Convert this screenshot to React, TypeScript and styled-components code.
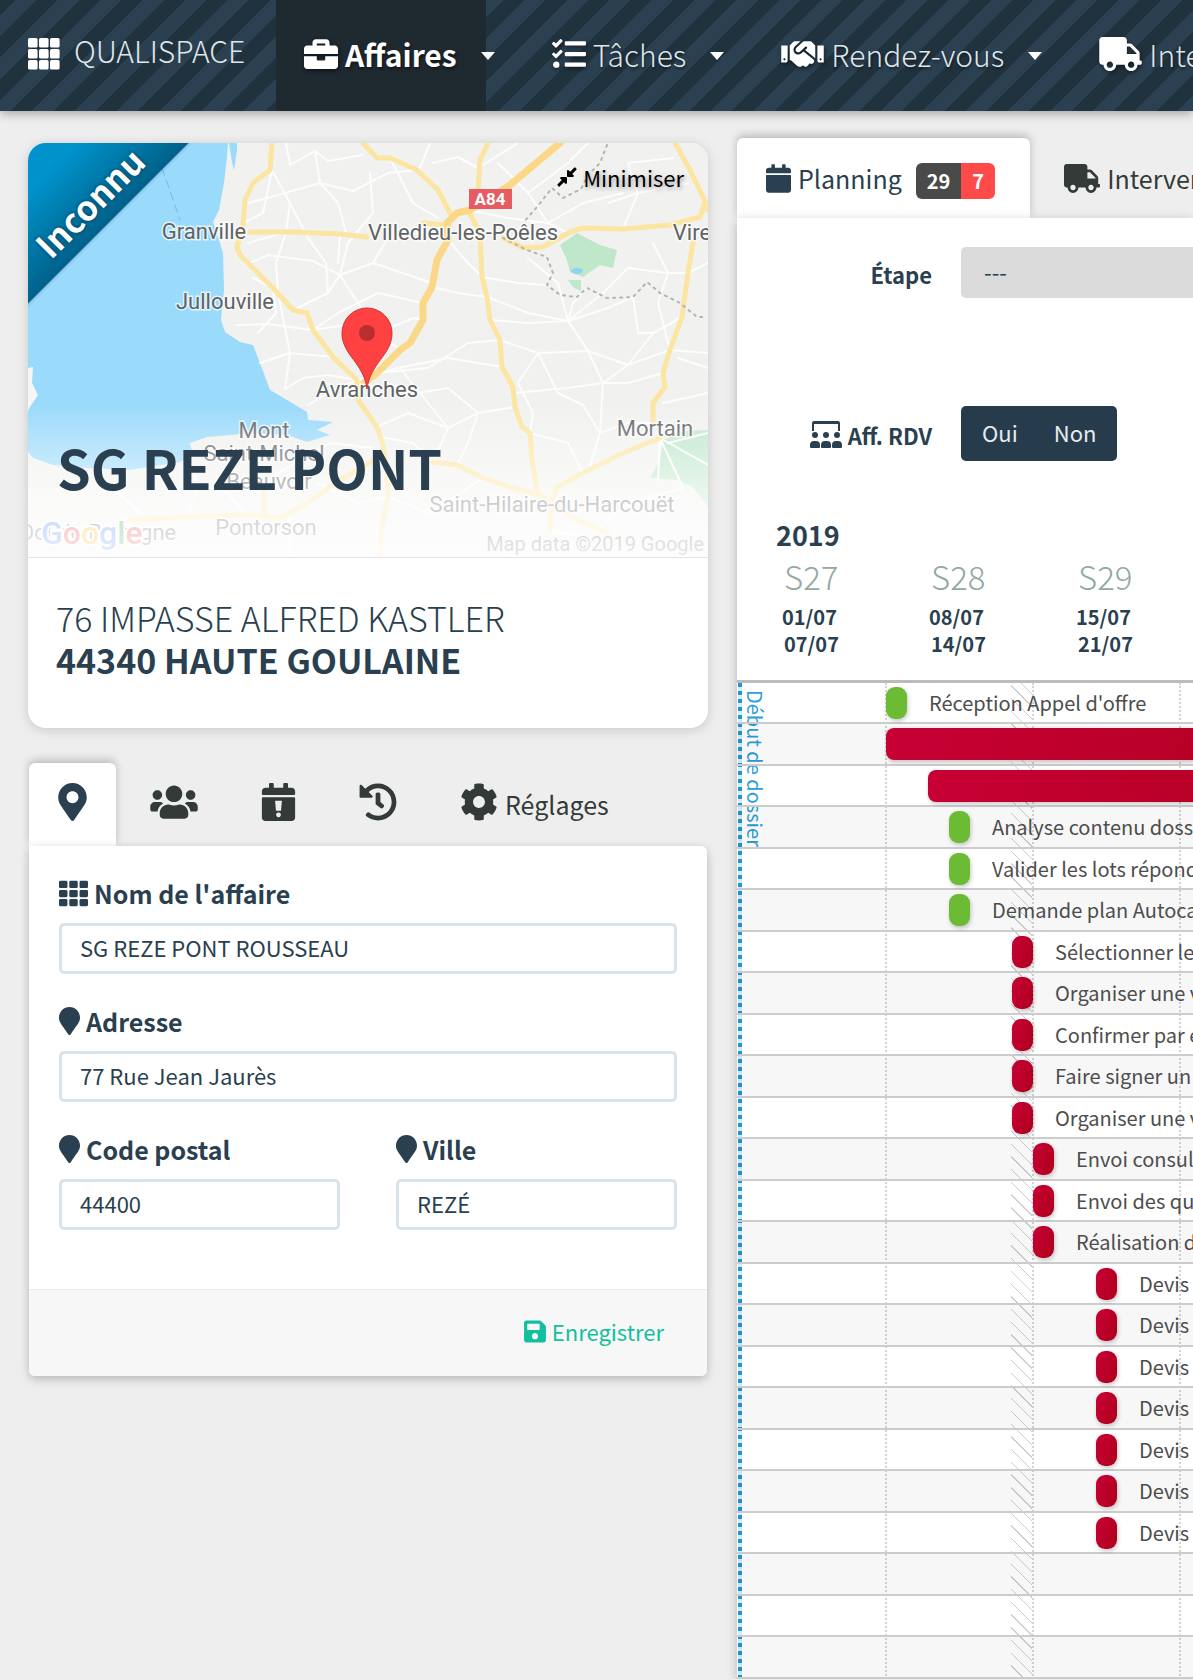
import React from "react";
import styled, { createGlobalStyle, css } from "styled-components";
import {
  FaBriefcase,
  FaCalendar,
  FaCog,
  FaCompressAlt,
  FaHandshake,
  FaHistory,
  FaMapMarker,
  FaMapMarkerAlt,
  FaSave,
  FaTasks,
  FaTh,
  FaTruck,
  FaUsers,
} from "react-icons/fa";

const NAVY = "#2a3f4f";
const GREEN = "#6bbb35";
const FONT = `"Noto Sans CJK SC", "Noto Sans", sans-serif`;

const GlobalStyle = createGlobalStyle`
  *, *::before, *::after { box-sizing: border-box; }
  body {
    margin: 0;
    background: #eeeeee;
    color: ${NAVY};
    font-family: ${FONT};
    font-size: 24px;
    line-height: 36px;
    overflow-x: hidden;
  }
  button, input, select { font: inherit; color: inherit; }
  a { color: inherit; text-decoration: none; }
`;

/* ---------- icons ---------- */

const Icon = styled.span<{ $w: number; $h?: number }>`
  display: inline-flex;
  flex: none;
  align-items: center;
  justify-content: center;
  width: ${(p) => p.$w}px;
  svg {
    display: block;
    width: 100%;
    height: ${(p) => p.$h ?? p.$w}px;
  }
`;

const GridIcon = () => (
  <svg viewBox="0 0 32 32" fill="currentColor" aria-hidden="true">
    {[0, 11, 22].map((y) =>
      [0, 11, 22].map((x) => <rect key={`${x}-${y}`} x={x} y={y} width="9.6" height="9.6" rx="1.6" />)
    )}
  </svg>
);

const CalendarAlertIcon = () => (
  <svg viewBox="0 0 448 512" fill="currentColor" fillRule="evenodd" aria-hidden="true">
    <path d="M12 192h424c6.600 0 12 5.400 12 12v260c0 26.500-21.500 48-48 48H48c-26.500 0-48-21.500-48-48V204c0-6.600 5.400-12 12-12zm436-44v-36c0-26.500-21.500-48-48-48h-48V12c0-6.600-5.400-12-12-12h-40c-6.600 0-12 5.400-12 12v52H160V12c0-6.600-5.400-12-12-12h-40c-6.600 0-12 5.400-12 12v52H48C21.500 64 0 85.500 0 112v36c0 6.600 5.400 12 12 12h424c6.600 0 12-5.400 12-12zM178 240l12 134h68l12-134zM224 396a32 32 0 1 0 0.100 0z" />
  </svg>
);

const MeetingIcon = () => (
  <svg viewBox="0 0 32 27" fill="currentColor" aria-hidden="true">
    <path d="M2 10V2a2 2 0 0 1 2-2h24a2 2 0 0 1 2 2v8h-2V3H4v7z" />
    {[5, 16, 27].map((x) => (
      <g key={x}>
        <circle cx={x} cy="14" r="3" />
        <path d={`M${x - 5} 26v-2a4 4 0 0 1 4-4h2a4 4 0 0 1 4 4v2q0 1-1 1h-8q-1 0-1-1z`} />
      </g>
    ))}
  </svg>
);

/* ---------- top bar ---------- */

const TopBar = styled.header`
  position: relative;
  display: flex;
  height: 111px;
  overflow: hidden;
  color: #ffffff;
  background: repeating-linear-gradient(135deg, #21323f 0 11px, #2b4050 11px 26px, #21323f 26px 30px);
`;

const TopBarShadow = styled.div`
  box-shadow: 0 2px 10px rgba(0, 0, 0, 0.35);
`;

const Brand = styled.a`
  display: flex;
  flex: none;
  align-items: center;
  gap: 14px;
  width: 276px;
  padding-left: 28px;
  padding-bottom: 4px;
  font-size: 30px;
  font-weight: 300;
`;

const BrandName = styled.span`
  padding-bottom: 8px;
  color: #dfe6ea;
`;

const NavItem = styled.div`
  display: flex;
  flex: none;
`;

const NavLink = styled.a<{ $active?: boolean }>`
  display: flex;
  align-items: center;
  gap: 7px;
  padding: 0 29px 4px 28px;
  font-size: 30px;
  font-weight: ${(p) => (p.$active ? 700 : 300)};
  color: ${(p) => (p.$active ? "#ffffff" : "#dfe6ea")};
  background: ${(p) => (p.$active ? "#1e2930" : "transparent")};
  text-shadow: 1px 2px 3px rgba(0, 0, 0, 0.5);
  svg {
    color: #ffffff;
    filter: drop-shadow(1px 2px 2px rgba(0, 0, 0, 0.5));
  }
`;

const CaretButton = styled.button`
  width: 47px;
  margin-left: -9px;
  padding: 0 0 0 4px;
  border: 0;
  background: none;
  &::before {
    content: "";
    display: block;
    width: 14px;
    border: 7px solid transparent;
    border-top: 8px solid #ffffff;
    border-bottom: 0;
  }
`;

/* ---------- page ---------- */

const Page = styled.main`
  display: grid;
  grid-template-columns: minmax(0, 85fr) minmax(0, 57fr);
  column-gap: 29px;
  align-items: start;
  padding-left: 28px;
`;

const LeftColumn = styled.div`
  display: grid;
  gap: 35px;
  padding-top: 32px;
`;

const MapCard = styled.section`
  overflow: hidden;
  border-radius: 18px;
  background: #ffffff;
  box-shadow: 0 2px 12px rgba(0, 0, 0, 0.16);
`;

const MapArea = styled.div`
  position: relative;
  height: 415px;
  border-bottom: 1px solid #e4e4e4;
  overflow: hidden;
`;

const MapDrawing = styled.svg`
  display: block;
  width: 100%;
  height: 100%;
  font-family: Roboto, sans-serif;
`;

const MapFade = styled.div`
  position: absolute;
  inset: 260px 0 0;
  background: linear-gradient(rgba(255, 255, 255, 0), rgba(255, 255, 255, 0.66) 60%, rgba(255, 255, 255, 0.86));
`;

const Ribbon = styled.div`
  position: absolute;
  top: -30px;
  left: -94px;
  width: 260px;
  height: 128px;
  padding-bottom: 4px;
  display: flex;
  align-items: flex-end;
  justify-content: center;
  transform: rotate(-45deg);
  background: linear-gradient(#0092ca 40%, #00618a);
  box-shadow: 0 0 4px rgba(0, 0, 0, 0.3);
  color: #ffffff;
  font-size: 34px;
  font-weight: 700;
  line-height: 48px;
  text-shadow: 0 0 4px rgba(0, 0, 0, 0.5);
`;

const MinimiseButton = styled.button`
  position: absolute;
  top: 16px;
  right: 24px;
  display: flex;
  align-items: center;
  gap: 5px;
  padding: 0;
  border: 0;
  background: none;
  color: #000000;
  font-size: 22px;
  text-shadow: 1px 2px 4px rgba(0, 0, 0, 0.35);
`;

const CardTitle = styled.h1`
  position: absolute;
  left: 29px;
  bottom: 50px;
  margin: 0;
  font-size: 54px;
  line-height: 80px;
  font-weight: 700;
`;

const Address = styled.address`
  padding: 39px 28px 47px;
  font-style: normal;
  font-size: 34px;
  line-height: 42px;
  font-weight: 300;
  strong {
    display: block;
    font-weight: 700;
  }
`;

/* ---------- tabs and panels ---------- */

const Tabs = styled.nav`
  position: relative;
  display: flex;
  align-items: stretch;
`;

const Tab = styled.button<{ $active?: boolean }>`
  display: flex;
  flex: none;
  align-items: center;
  gap: 7px;
  padding: 0 29px;
  border: 0;
  border-radius: 6px 6px 0 0;
  background: none;
  font-size: 25px;
  white-space: nowrap;
  color: ${(p) => (p.$active ? NAVY : "#333a38")};
  ${(p) =>
    p.$active &&
    css`
      background: #ffffff;
      box-shadow: 0 -3px 9px rgba(0, 0, 0, 0.22);
    `}
`;

const CaseTabs = styled(Tabs)`
  height: 83px;
  padding: 0 1px;
  ${Tab} {
    padding-bottom: 6px;
  }
  ${Tab} + ${Tab} {
    margin-left: 5px;
  }
`;

const TabLabel = styled.span`
  padding-top: 4px;
`;

const Panel = styled.form`
  position: relative;
  margin: 0 1px;
  border-radius: 0 6px 6px 6px;
  background: #ffffff;
  box-shadow: 0 3px 10px rgba(0, 0, 0, 0.24);
  overflow: hidden;
`;

const TabbedSection = styled.section`
  isolation: isolate;
`;

const Fields = styled.div`
  display: grid;
  grid-template-columns: repeat(2, minmax(0, 1fr));
  column-gap: 56px;
  row-gap: 28px;
  padding: 28px 30px 59px;
`;

const Field = styled.div<{ $wide?: boolean }>`
  display: grid;
  gap: 11px;
  grid-column: ${(p) => (p.$wide ? "1 / -1" : "auto")};
`;

const FieldLabel = styled.label`
  display: flex;
  align-items: center;
  gap: 6px;
  font-size: 25px;
  line-height: 38px;
  font-weight: 700;
`;

const TextInput = styled.input`
  width: 100%;
  height: 51px;
  padding: 0 18px 3px;
  border: 3px solid #d9e4ea;
  border-radius: 5px;
  background: #ffffff;
  font-size: 22px;
  outline: 0;
`;

const PanelFooter = styled.footer`
  display: flex;
  justify-content: flex-end;
  padding: 23px 43px 27px;
  border-top: 1px solid #ececec;
  background: #f7f7f7;
`;

const SaveButton = styled.button`
  display: flex;
  align-items: center;
  gap: 6px;
  padding: 0;
  border: 0;
  background: none;
  color: #11c09f;
  font-size: 22px;
`;

/* ---------- planning ---------- */

const PlanningSection = styled(TabbedSection)`
  padding-top: 27px;
`;

const PlanningTabs = styled(Tabs)`
  height: 80px;
  ${Tab} {
    padding-right: 35px;
  }
  ${Tab} + ${Tab} {
    padding-left: 34px;
  }
`;

const Badges = styled.span`
  display: flex;
  margin: 5px 0 0 7px;
  overflow: hidden;
  border-radius: 6px;
  color: #ffffff;
  font-size: 20px;
  font-weight: 700;
`;

const Badge = styled.span<{ $tone: string }>`
  padding: 0 11px;
  background: ${(p) => p.$tone};
`;

const PlanningPanel = styled.div`
  position: relative;
  background: #ffffff;
  box-shadow: 0 3px 10px rgba(0, 0, 0, 0.24);
`;

const Filters = styled.div`
  display: grid;
  grid-template-columns: 195px minmax(0, 1fr);
  column-gap: 29px;
  row-gap: 108px;
  align-items: center;
  height: 270px;
  padding-top: 29px;
  align-content: start;
`;

const FilterLabel = styled.label`
  display: flex;
  align-items: center;
  justify-content: flex-end;
  gap: 6px;
  padding-top: 2px;
  font-size: 22px;
  font-weight: 700;
`;

const StepSelect = styled.select`
  appearance: none;
  width: 100%;
  height: 51px;
  padding: 0 23px 4px;
  border: 0;
  border-radius: 5px 0 0 5px;
  background: #dbdbdb;
  font-size: 22px;
`;

const Toggle = styled.div`
  display: flex;
  justify-self: start;
  padding: 0 3px;
  border-radius: 5px;
  background: #263c4c;
`;

const ToggleButton = styled.button`
  height: 55px;
  padding: 0 18px 3px;
  border: 0;
  background: none;
  color: #e6ebee;
  font-size: 22px;
`;

const WeekHeader = styled.div`
  height: 195px;
  overflow: hidden;
  border-bottom: 3px solid #bcbcbc;
`;

const Year = styled.div`
  padding: 28px 0 0 39px;
  font-size: 27px;
  line-height: 38px;
  font-weight: 700;
`;

const WeekList = styled.div`
  display: flex;
`;

const Week = styled.div`
  display: grid;
  flex: none;
  width: 147px;
  padding-left: 45px;
  font-size: 20px;
  line-height: 27px;
  font-weight: 700;
`;

const WeekNumber = styled.span`
  padding: 0 0 4px 2px;
  color: #93a9a1;
  font-size: 33px;
  line-height: 45px;
  font-weight: 300;
`;

const WeekEnd = styled.span`
  padding-left: 2px;
`;

const Chart = styled.div`
  position: relative;
  overflow: hidden;
`;

const ChartBackdrop = styled.div`
  position: absolute;
  inset: 0;
  display: flex;
  padding-left: 3px;
`;

const WeekColumn = styled.div<{ $holiday?: boolean }>`
  flex: none;
  width: 147px;
  border-right: 2px dotted #d4d4d4;
  ${(p) =>
    p.$holiday &&
    css`
      background: repeating-linear-gradient(45deg, #cecece 0 1px, transparent 1px 9px) right / 21px 100% no-repeat;
    `}
`;

const StartMark = styled.div`
  position: absolute;
  inset: 0 auto 0 1px;
  padding: 7px 0 0 4px;
  background: repeating-linear-gradient(#1d96d2 0 4px, #d5ecf7 4px 8px) left / 4px 100% no-repeat;
  color: #2a9fd8;
  font-size: 20px;
  line-height: 26px;
  writing-mode: vertical-rl;
  white-space: nowrap;
`;

const Row = styled.div`
  position: relative;
  display: flex;
  align-items: center;
  gap: 22px;
  height: 41px;
  padding-left: 2px;
  border-bottom: 2px solid #cccccc;
  color: #4d4d4d;
  font-size: 20px;
  white-space: nowrap;
  &:nth-child(odd) {
    height: 42px;
    background: rgba(0, 0, 0, 0.03);
  }
`;

const Bar = styled.span<{ $day: number; $days: number; $color: string }>`
  flex: none;
  width: ${(p) => p.$days * 21}px;
  height: 32px;
  margin-left: ${(p) => p.$day * 21}px;
  border-radius: ${(p) => (p.$days > 1 ? 8 : 9)}px;
  background: ${(p) => (p.$color === "red" ? "linear-gradient(110deg, #c80035, #ae001c)" : GREEN)};
  box-shadow: 1px 2px 4px rgba(0, 0, 0, 0.22);
`;

type Task = { day: number; days?: number; color: string; label?: string };

const tasks: (Task | null)[] = [
  { day: 7, color: "green", label: "Réception Appel d'offre" },
  { day: 7, days: 24, color: "red" },
  { day: 9, days: 22, color: "red" },
  { day: 10, color: "green", label: "Analyse contenu dossier" },
  { day: 10, color: "green", label: "Valider les lots répondus" },
  { day: 10, color: "green", label: "Demande plan Autocad" },
  { day: 13, color: "red", label: "Sélectionner les lots" },
  { day: 13, color: "red", label: "Organiser une visite" },
  { day: 13, color: "red", label: "Confirmer par écrit" },
  { day: 13, color: "red", label: "Faire signer un accord" },
  { day: 13, color: "red", label: "Organiser une visite" },
  { day: 14, color: "red", label: "Envoi consultation" },
  { day: 14, color: "red", label: "Envoi des quantités" },
  { day: 14, color: "red", label: "Réalisation devis" },
  ...Array.from({ length: 7 }, () => ({ day: 17, color: "red", label: "Devis" })),
  null,
  null,
  null,
];

const weeks = [
  ["S27", "01/07", "07/07"],
  ["S28", "08/07", "14/07"],
  ["S29", "15/07", "21/07"],
  ["S30", "22/07", "28/07"],
];

/* ---------- map ---------- */

const minorRoads = [
  "M258 0L262 22 287 8 300 18 335 12M287 8L292 40 310 60 318 90M220 60L250 52 292 40 325 48 360 30 389 27",
  "M244 27L262 60 258 89 248 120 250 150 262 210 257 246M222 120L240 112 285 118 312 132 345 120 404 140",
  "M265 167L300 150 312 132 320 100 345 70 342 30M209 182L240 181 285 187 310 170 350 150 395 160",
  "M232 220L262 210 305 214M257 246L275 235 300 232 329 237 370 225 420 215 474 224",
  "M312 132L330 160 350 190 372 207M300 150L298 120 280 95 262 60M345 120L360 95 420 85",
  "M349 230L400 225 440 200 472 197 510 210 560 208 600 222 642 207 680 210",
  "M390 30L402 0M405 20L430 14 450 25 490 0M362 15L385 60 410 75M470 20L500 50 540 20 560 0",
  "M500 50L520 80 540 90M600 20L610 50 595 86M600 20L645 15M610 50L660 40M580 60L610 50",
  "M420 97L440 120 454 134 490 140 519 142M404 144L430 150 459 154 500 170 540 178 580 165 605 154",
  "M462 177L500 180 540 178 560 208 575 240 572 290 560 330M540 178L530 140 500 115",
  "M540 178L575 150 600 125 640 130 660 130M575 240L600 222 625 190 654 174M575 240L540 245 485 250",
  "M510 210L490 240 505 270 502 290M510 210L530 250 555 262 572 290 600 280 625 280",
  "M349 284L380 270 420 285 450 270 487 264M360 240L390 250 420 245 450 270 440 300 429 322",
  "M372 225L400 260 420 285 405 319M352 294L385 300 405 319M329 237L300 250 280 262",
  "M625 100L640 130 630 160 642 207M680 120L660 130M680 225L650 215M635 230L600 240 575 240",
  "M635 260L680 250M632 295L680 322M632 295L655 345M632 295L630 338M640 300L680 290M502 290L540 300 555 330",
  "M120 377L90 350 60 330M159 374L170 345 162 318M219 372L200 350 165 340M235 344L250 330 302 300 345 305",
  "M262 375L262 414M290 340L330 360 358 354M360 354L400 370 455 335M522 387L560 395 600 360 655 345",
  "M215 80L235 70 244 27M220 100L258 89M225 135L245 145 248 170 230 190M312 91L310 120M285 187L330 180 350 190 385 175 395 177",
  "M440 67L480 75 520 80 555 60 595 50M559 145L545 160 540 178M605 154L610 190 625 190",
];

const mainRoads = [
  "M244 0L242 27 225 40 217 57 215 82 209 104 212 112 245 145 265 167 279 170 285 187 305 214 329 237 330 257 349 284 355 302 359 330 360 354 354 384 352 414",
  "M222 89L265 89 312 91 339 94",
  "M335 0L349 15 362 15 389 27 410 47 422 70",
  "M460 0L452 17 450 48",
  "M440 67L452 90 454 134 459 154 462 177 472 197 474 224 485 244 487 264 494 284 502 290 504 317 510 352",
  "M395 80L415 82M475 95L495 105 515 104 542 89 555 85 595 86 642 82 672 74 677 59",
  "M647 0L662 27 675 54 680 67M665 99L660 130 654 174 642 207 635 230 637 244 625 260 625 280",
  "M632 295L595 310 555 330 529 344 524 357 522 387",
  "M405 319L429 322 455 335 485 345 512 352 545 375 580 390",
  "M102 377L159 374 219 372 252 375 279 360 312 337 345 318M235 344L237 372",
];

const places: [string, number, number][] = [
  ["Granville", 176, 96],
  ["Jullouville", 197, 166],
  ["Villedieu-les-Poêles", 435, 97],
  ["Vire", 664, 97],
  ["Avranches", 339, 254],
  ["Mortain", 627, 293],
  ["Mont", 236, 295],
  ["Saint-Michel", 236, 318],
  ["Beauvoir", 241, 346],
  ["Pontorson", 238, 392],
  ["Dol-de-Bretagne", 70, 397],
  ["Saint-Hilaire-du-Harcouët", 524, 369],
];

const LocationMap = () => (
  <MapDrawing viewBox="0 0 680 414" preserveAspectRatio="xMidYMid slice" role="img" aria-label="Carte">
    <rect width="680" height="414" fill="#f1f1ef" />
    <path
      fill="#9adafb"
      d="M0 0H200L199 14 196 40 191 67 185 79 189 90 195 110 196 147 193 177 197 189 212 199 225 202 232 220 242 247 259 257 279 269 280 277 305 279 289 287 302 292 279 299 259 292 225 290 179 294 162 300 165 312 152 319 102 327 59 325 25 322 5 315 0 309zM201 0L204 19 206 27 209 7V0z"
    />
    <path fill="#f7f7f7" d="M0 225L5 224 4 240 10 252 2 264 0 268z" />
    <path
      fill="#bfe8cb"
      d="M532 102L549 90 572 102 589 107 585 125 572 122 555 134 542 129 539 117zM540 137L553 137 553 148 545 144zM635 297L655 288 680 287V364L665 344 649 337 622 335 632 317z"
    />
    <ellipse cx="549" cy="128" rx="6" ry="3" fill="#8fd4f5" />
    <g fill="none" strokeLinejoin="round" strokeLinecap="round">
      <g stroke="#fdfdfd" strokeWidth="2">
        {minorRoads.map((d) => (
          <path key={d} d={d} />
        ))}
      </g>
      <g stroke="#fce5a0" strokeWidth="5">
        {mainRoads.map((d) => (
          <path key={d} d={d} />
        ))}
      </g>
      <path
        stroke="#fbd888"
        strokeWidth="7"
        d="M532 0L482 42 442 67 429 70 419 80 420 97 409 117 404 144 395 160 395 177 382 200 372 207 349 230 336 240"
      />
      <path
        stroke="#b4b4b4"
        strokeWidth="2"
        strokeDasharray="2 5"
        d="M579 2L572 20 560 32 553 46 535 55 524 45 509 64 495 80M475 95L499 107 519 114 525 130 519 142 532 152 549 154 559 145 579 155 605 154 619 139 632 150 652 160 669 174 679 174"
      />
      <path stroke="#79b9dc" strokeWidth="1" strokeDasharray="8 5" d="M134 25L152 77" />
    </g>
    <g fill="#5f6366" fontSize="22" textAnchor="middle" stroke="#ffffff" strokeWidth="3" paintOrder="stroke" strokeOpacity="0.7">
      {places.map(([name, x, y]) => (
        <text key={name} x={x} y={y}>
          {name}
        </text>
      ))}
    </g>
    <rect x="441" y="46" width="43" height="20" fill="#e75c62" />
    <text x="462" y="62" fill="#ffffff" fontSize="17" fontWeight="700" textAnchor="middle">
      A84
    </text>
    <path fill="#ff4141" stroke="#c93434" d="M339 246c-3-26-25-34-25-56a25 25 0 0 1 50 0c0 22-22 30-25 56z" />
    <circle cx="339" cy="190" r="8" fill="#b92f2f" />
    <text x="13" y="401" fontSize="32" fontWeight="500" stroke="#ffffff" strokeWidth="4" paintOrder="stroke">
      <tspan fill="#4285f4">G</tspan>
      <tspan fill="#ea4335">o</tspan>
      <tspan fill="#fbbc05">o</tspan>
      <tspan fill="#4285f4">g</tspan>
      <tspan fill="#34a853">l</tspan>
      <tspan fill="#ea4335">e</tspan>
    </text>
    <text x="676" y="408" fill="#5c5c5c" fontSize="20" textAnchor="end">
      Map data ©2019 Google
    </text>
  </MapDrawing>
);

/* ---------- app ---------- */

export default function App() {
  return (
    <>
      <GlobalStyle />
      <TopBarShadow>
        <TopBar>
          <Brand href="#">
            <Icon $w={32}>
              <GridIcon />
            </Icon>
            <BrandName>QUALISPACE</BrandName>
          </Brand>
          <NavItem>
            <NavLink href="#" $active>
              <Icon $w={34}>
                <FaBriefcase />
              </Icon>
              Affaires
            </NavLink>
            <CaretButton aria-label="Menu Affaires" />
          </NavItem>
          <NavItem>
            <NavLink href="#">
              <Icon $w={34}>
                <FaTasks />
              </Icon>
              Tâches
            </NavLink>
            <CaretButton aria-label="Menu Tâches" />
          </NavItem>
          <NavItem>
            <NavLink href="#">
              <Icon $w={43} $h={34}>
                <FaHandshake />
              </Icon>
              Rendez-vous
            </NavLink>
            <CaretButton aria-label="Menu Rendez-vous" />
          </NavItem>
          <NavItem>
            <NavLink href="#">
              <Icon $w={43} $h={34}>
                <FaTruck />
              </Icon>
              Interventions
            </NavLink>
          </NavItem>
        </TopBar>
      </TopBarShadow>

      <Page>
        <LeftColumn>
          <MapCard>
            <MapArea>
              <LocationMap />
              <MapFade />
              <Ribbon>Inconnu</Ribbon>
              <MinimiseButton type="button">
                <Icon $w={22}>
                  <FaCompressAlt />
                </Icon>
                Minimiser
              </MinimiseButton>
              <CardTitle>SG REZE PONT</CardTitle>
            </MapArea>
            <Address>
              76 IMPASSE ALFRED KASTLER
              <strong>44340 HAUTE GOULAINE</strong>
            </Address>
          </MapCard>

          <TabbedSection>
            <CaseTabs>
              <Tab $active type="button" aria-label="Adresse">
                <Icon $w={29} $h={38}>
                  <FaMapMarkerAlt />
                </Icon>
              </Tab>
              <Tab type="button" aria-label="Contacts">
                <Icon $w={48} $h={38}>
                  <FaUsers />
                </Icon>
              </Tab>
              <Tab type="button" aria-label="Échéances">
                <Icon $w={35} $h={38}>
                  <CalendarAlertIcon />
                </Icon>
              </Tab>
              <Tab type="button" aria-label="Historique">
                <Icon $w={38}>
                  <FaHistory />
                </Icon>
              </Tab>
              <Tab type="button">
                <Icon $w={38}>
                  <FaCog />
                </Icon>
                <TabLabel>Réglages</TabLabel>
              </Tab>
            </CaseTabs>
            <Panel>
              <Fields>
                <Field $wide>
                  <FieldLabel htmlFor="name">
                    <Icon $w={29}>
                      <FaTh />
                    </Icon>
                    Nom de l'affaire
                  </FieldLabel>
                  <TextInput id="name" defaultValue="SG REZE PONT ROUSSEAU" />
                </Field>
                <Field $wide>
                  <FieldLabel htmlFor="street">
                    <Icon $w={21} $h={28}>
                      <FaMapMarker />
                    </Icon>
                    Adresse
                  </FieldLabel>
                  <TextInput id="street" defaultValue="77 Rue Jean Jaurès" />
                </Field>
                <Field>
                  <FieldLabel htmlFor="zip">
                    <Icon $w={21} $h={28}>
                      <FaMapMarker />
                    </Icon>
                    Code postal
                  </FieldLabel>
                  <TextInput id="zip" defaultValue="44400" />
                </Field>
                <Field>
                  <FieldLabel htmlFor="city">
                    <Icon $w={21} $h={28}>
                      <FaMapMarker />
                    </Icon>
                    Ville
                  </FieldLabel>
                  <TextInput id="city" defaultValue="REZÉ" />
                </Field>
              </Fields>
              <PanelFooter>
                <SaveButton type="button">
                  <Icon $w={22} $h={25}>
                    <FaSave />
                  </Icon>
                  Enregistrer
                </SaveButton>
              </PanelFooter>
            </Panel>
          </TabbedSection>
        </LeftColumn>

        <PlanningSection>
          <PlanningTabs>
            <Tab $active type="button">
              <Icon $w={25} $h={29}>
                <FaCalendar />
              </Icon>
              Planning
              <Badges>
                <Badge $tone="#4a4a4a">29</Badge>
                <Badge $tone="#ff4a4a">7</Badge>
              </Badges>
            </Tab>
            <Tab type="button">
              <Icon $w={36} $h={29}>
                <FaTruck />
              </Icon>
              Interventions
            </Tab>
          </PlanningTabs>
          <PlanningPanel>
            <Filters>
              <FilterLabel htmlFor="step">Étape</FilterLabel>
              <StepSelect id="step">
                <option>---</option>
              </StepSelect>
              <FilterLabel as="span" id="rdv">
                <Icon $w={32} $h={27}>
                  <MeetingIcon />
                </Icon>
                Aff. RDV
              </FilterLabel>
              <Toggle role="group" aria-labelledby="rdv">
                <ToggleButton type="button">Oui</ToggleButton>
                <ToggleButton type="button">Non</ToggleButton>
              </Toggle>
            </Filters>
            <WeekHeader>
              <Year>2019</Year>
              <WeekList>
                {weeks.map(([number, from, to]) => (
                  <Week key={number}>
                    <WeekNumber>{number}</WeekNumber>
                    <span>{from}</span>
                    <WeekEnd>{to}</WeekEnd>
                  </Week>
                ))}
              </WeekList>
            </WeekHeader>
            <Chart>
              <ChartBackdrop>
                <WeekColumn />
                <WeekColumn $holiday />
                <WeekColumn />
                <WeekColumn />
                <StartMark>Début de dossier</StartMark>
              </ChartBackdrop>
              {tasks.map((task, i) => (
                <Row key={i}>
                  {task && <Bar $day={task.day} $days={task.days ?? 1} $color={task.color} />}
                  {task?.label}
                </Row>
              ))}
            </Chart>
          </PlanningPanel>
        </PlanningSection>
      </Page>
    </>
  );
}
